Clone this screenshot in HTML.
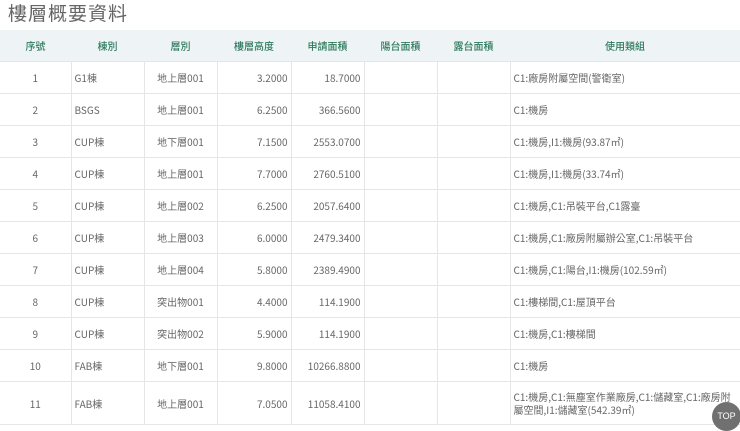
<!DOCTYPE html>
<html><head><meta charset="utf-8"><style>
body{margin:0;width:740px;height:429px;overflow:hidden;background:#fff;font-family:"Liberation Sans","Noto Sans CJK TC",sans-serif;}
h1{margin:0;height:30px;line-height:25px;font-size:19px;font-weight:normal;color:#666;padding-left:8px;letter-spacing:1px;font-family:"Noto Sans CJK TC",sans-serif;}
table{border-collapse:collapse;table-layout:fixed;width:740px;font-family:"Noto Sans CJK TC",sans-serif;}
th{background:#eef4f6;color:#2f7a5c;font-weight:500;font-size:10px;height:31px;padding:0;border-bottom:1px solid #e0e6e8;}
td{font-size:10px;color:#666;height:31px;border:1px solid #e6e6e6;padding:0 3px;line-height:13px;}
td:first-child{border-left:none}
td:last-child{border-right:none}
.c{text-align:center}.r{text-align:right}
tr.t td{height:42px}
.top{position:absolute;left:712px;top:402px;width:29px;height:29px;border-radius:50%;background:#707070;color:#fff;font-size:9px;line-height:29px;text-align:center;}
</style></head><body>
<h1>樓層概要資料</h1>
<table>
<colgroup><col style="width:71px"><col style="width:73px"><col style="width:73px"><col style="width:74px"><col style="width:73px"><col style="width:73px"><col style="width:73px"><col></colgroup>
<tr><th>序號</th><th>棟別</th><th>層別</th><th>樓層高度</th><th>申請面積</th><th>陽台面積</th><th>露台面積</th><th>使用類組</th></tr>
<tr><td class="c">1</td><td>G1棟</td><td class="c">地上層001</td><td class="r">3.2000</td><td class="r">18.7000</td><td></td><td></td><td>C1:廠房附屬空間(警衛室)</td></tr>
<tr><td class="c">2</td><td>BSGS</td><td class="c">地上層001</td><td class="r">6.2500</td><td class="r">366.5600</td><td></td><td></td><td>C1:機房</td></tr>
<tr><td class="c">3</td><td>CUP棟</td><td class="c">地下層001</td><td class="r">7.1500</td><td class="r">2553.0700</td><td></td><td></td><td>C1:機房,I1:機房(93.87㎡)</td></tr>
<tr><td class="c">4</td><td>CUP棟</td><td class="c">地上層001</td><td class="r">7.7000</td><td class="r">2760.5100</td><td></td><td></td><td>C1:機房,I1:機房(33.74㎡)</td></tr>
<tr><td class="c">5</td><td>CUP棟</td><td class="c">地上層002</td><td class="r">6.2500</td><td class="r">2057.6400</td><td></td><td></td><td>C1:機房,C1:吊裝平台,C1露臺</td></tr>
<tr><td class="c">6</td><td>CUP棟</td><td class="c">地上層003</td><td class="r">6.0000</td><td class="r">2479.3400</td><td></td><td></td><td>C1:機房,C1:廠房附屬辦公室,C1:吊裝平台</td></tr>
<tr><td class="c">7</td><td>CUP棟</td><td class="c">地上層004</td><td class="r">5.8000</td><td class="r">2389.4900</td><td></td><td></td><td>C1:機房,C1:陽台,I1:機房(102.59㎡)</td></tr>
<tr><td class="c">8</td><td>CUP棟</td><td class="c">突出物001</td><td class="r">4.4000</td><td class="r">114.1900</td><td></td><td></td><td>C1:樓梯間,C1:屋頂平台</td></tr>
<tr><td class="c">9</td><td>CUP棟</td><td class="c">突出物002</td><td class="r">5.9000</td><td class="r">114.1900</td><td></td><td></td><td>C1:機房,C1:樓梯間</td></tr>
<tr><td class="c">10</td><td>FAB棟</td><td class="c">地下層001</td><td class="r">9.8000</td><td class="r">10266.8800</td><td></td><td></td><td>C1:機房</td></tr>
<tr class="t"><td class="c">11</td><td>FAB棟</td><td class="c">地上層001</td><td class="r">7.0500</td><td class="r">11058.4100</td><td></td><td></td><td>C1:機房,C1:無塵室作業廠房,C1:儲藏室,C1:廠房附屬空間,I1:儲藏室(542.39㎡)</td></tr>
</table>
<div class="top">TOP</div>
</body></html>
